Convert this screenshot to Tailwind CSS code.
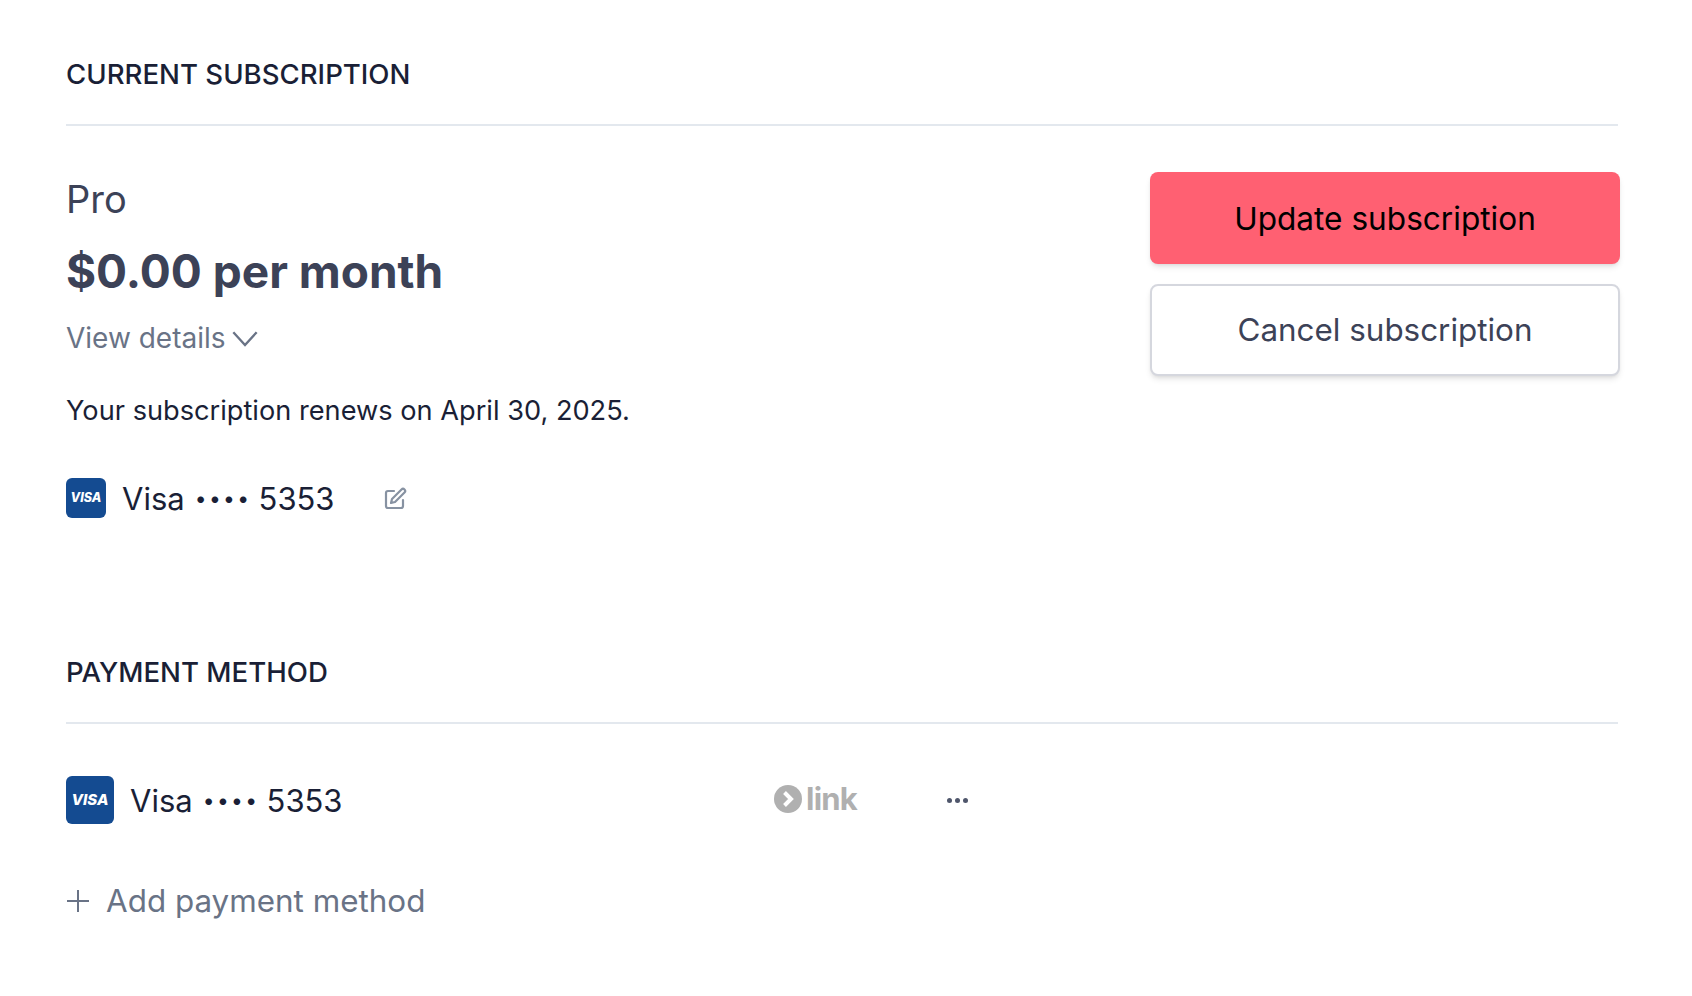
<!DOCTYPE html>
<html lang="en">
  <head>
    <meta charset="UTF-8" />
    <title>Subscription</title>
    <script src="https://cdn.jsdelivr.net/npm/@tailwindcss/browser@4"></script>
  </head>
  <body class="bg-white font-['Inter',sans-serif] text-[#1a1f36]">
    <div class="px-[66px] w-[1554px] box-content">
      <!-- current subscription -->
      <h2 class="pt-[55px] pb-[31px] text-[27.6px] leading-[38px] font-medium border-b-2 border-[#e3e8ee] w-[1552px]">CURRENT SUBSCRIPTION</h2>
      <div class="flex justify-between">
        <div>
          <div class="mt-[50px] text-[38px] leading-[46px] text-[#3c4257]">Pro</div>
          <div class="mt-[21px] text-[46px] leading-[56px] font-bold text-[#3c4257]">$0.00 per month</div>
          <div class="mt-[19px] flex items-center gap-[5px] text-[28px] leading-[40px] text-[#697386]">
            View details
            <svg class="w-[28px] h-[28px]" viewBox="0 0 24 24" fill="none" stroke="currentColor" stroke-width="2"><path d="M2 7l10 11L22 7" /></svg>
          </div>
          <p class="mt-[33px] text-[27.2px] leading-[40px]">Your subscription renews on April 30, 2025.</p>
          <div class="mt-[46px] flex items-center">
            <span class="w-[40px] h-[40px] rounded-[6px] bg-[#144b91] flex items-center justify-center text-white text-[12.5px] font-extrabold italic">VISA</span>
            <div class="ml-[16px] pt-[2px] flex items-center text-[31px] leading-[40px]">
              <span>Visa</span>
              <span class="ml-[10px] text-[21px] tracking-[2.4px]">••••</span>
              <span class="ml-[7px]">5353</span>
            </div>
            <svg class="ml-[48px] mt-[2px] w-[24px] h-[24px] text-[#8792a2]" viewBox="0 0 24 24" fill="none" stroke="currentColor" stroke-width="2.2" stroke-linecap="round" stroke-linejoin="round"><path d="M11 4H5a2 2 0 0 0-2 2v13a2 2 0 0 0 2 2h13a2 2 0 0 0 2-2v-6" /><path d="M18.5 2.5a2.1 2.1 0 0 1 3 3L12 15l-4 1 1-4z" /></svg>
          </div>
        </div>
        <div class="mt-[46px] w-[470px] flex flex-col gap-[20px]">
          <button class="h-[92px] pt-[2px] rounded-[8px] bg-[#ff6072] text-black text-[31.6px] shadow-md">Update subscription</button>
          <button class="h-[92px] pt-[2px] rounded-[8px] bg-white border-2 border-[#d5d7de] text-[#3c4257] text-[31.4px] shadow-md">Cancel subscription</button>
        </div>
      </div>

      <!-- payment method -->
      <h2 class="mt-[134px] pb-[31px] text-[27.6px] leading-[38px] font-medium border-b-2 border-[#e3e8ee] w-[1552px]">PAYMENT METHOD</h2>
      <div class="mt-[51px] flex items-center">
        <span class="w-[48px] h-[48px] rounded-[6px] bg-[#144b91] flex items-center justify-center text-white text-[15px] font-extrabold italic">VISA</span>
        <div class="ml-[16px] pt-[2px] w-[644px] flex items-center text-[31px] leading-[48px]">
          <span>Visa</span>
          <span class="ml-[10px] text-[21px] tracking-[2.4px]">••••</span>
          <span class="ml-[7px]">5353</span>
        </div>
        <span class="flex items-center w-[173px] mb-[2px] text-[#b0b0b0]">
          <svg class="w-[28px] h-[28px]" viewBox="0 0 28 28"><circle cx="14" cy="14" r="14" fill="currentColor" /><path d="M10.5 7.5L17 14l-6.5 6.5" fill="none" stroke="#fff" stroke-width="4" /></svg>
          <span class="ml-[4px] text-[31px] leading-[40px] font-bold tracking-tight">link</span>
        </span>
        <span class="flex gap-[3px]">
          <i class="w-[5px] h-[5px] rounded-full bg-[#4f566b]"></i><i class="w-[5px] h-[5px] rounded-full bg-[#4f566b]"></i><i class="w-[5px] h-[5px] rounded-full bg-[#4f566b]"></i>
        </span>
      </div>
      <div class="mt-[56px] flex items-center text-[#697386]">
        <svg class="w-[24px] h-[24px]" viewBox="0 0 24 24" fill="none" stroke="currentColor" stroke-width="2"><path d="M12 1v22M1 12h22" /></svg>
        <span class="ml-[16px] text-[31.4px] leading-[40px]">Add payment method</span>
      </div>
    </div>
  </body>
</html>
